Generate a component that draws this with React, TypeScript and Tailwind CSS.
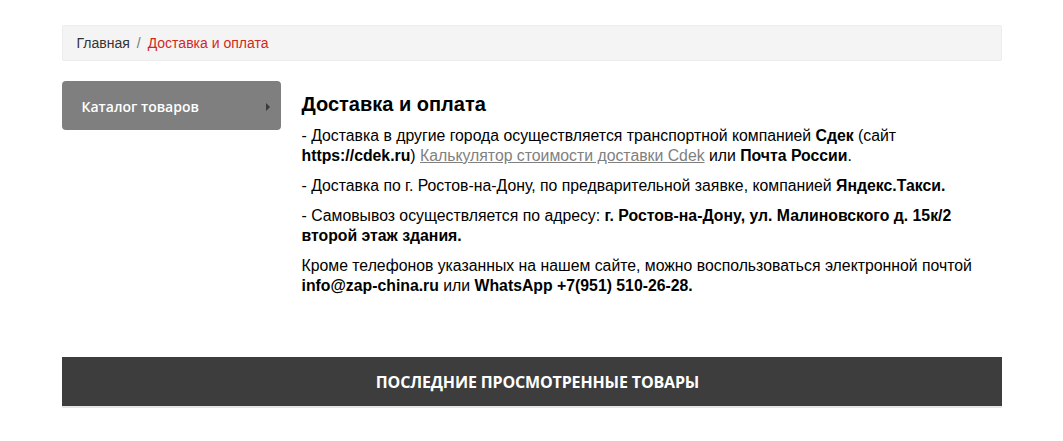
import { ReactNode } from "react";

const Crumbs = () => (
  <div className="h-[36px] flex items-center px-[14px] bg-[#f4f4f4] border border-[#ececec] rounded-[2px] text-[14px] font-['Liberation_Sans',Arial,sans-serif]">
    <a href="#" className="text-[#333]">
      Главная
    </a>
    <span className="text-[#777] px-[7px]">/</span>
    <span className="text-[#d2281e]">Доставка и оплата</span>
  </div>
);

const CatalogButton = () => (
  <button className="w-[219px] h-[49px] flex items-center justify-between pl-[20px] pr-[11px] pt-[2px] rounded-[4px] bg-[#7f7f7f] text-white text-[14px] font-semibold font-['Open_Sans',sans-serif] cursor-pointer">
    Каталог товаров
    <span className="w-0 h-0 border-y-[4px] border-y-transparent border-l-[4px] border-l-[#3a3a3a]" />
  </button>
);

const P = ({ children }: { children: ReactNode }) => (
  <p className="mb-[10px]">{children}</p>
);

const App = () => {
  return (
    <div className="bg-white min-h-[441px] pt-[25px] text-black">
      <div className="w-[940px] mx-auto">
        <Crumbs />
        <div className="flex gap-[20px] mt-[20px]">
          <aside className="w-[220px] shrink-0">
            <CatalogButton />
          </aside>
          <div className="w-[700px] pt-[11px] font-['Liberation_Sans',Arial,sans-serif] text-[15.8px] leading-[20px]">
            <h1 className="text-[20px] leading-[24px] font-bold mb-[10px]">Доставка и оплата</h1>
            <P>
              - Доставка в другие города осуществляется транспортной компанией <b>Сдек</b> (сайт{" "}
              <b>https://cdek.ru</b>){" "}
              <a href="#" className="text-[#808080] underline">
                Калькулятор стоимости доставки Cdek
              </a>{" "}
              или <b>Почта России</b>.
            </P>
            <P>
              - Доставка по г. Ростов-на-Дону, по предварительной заявке, компанией <b>Яндекс.Такси.</b>
            </P>
            <P>
              - Самовывоз осуществляется по адресу: <b>г. Ростов-на-Дону, ул. Малиновского д. 15к/2 второй этаж здания.</b>
            </P>
            <P>
              Кроме телефонов указанных на нашем сайте, можно воспользоваться электронной почтой{" "}
              <b>info@zap-china.ru</b> или <b>WhatsApp +7(951) 510-26-28.</b>
            </P>
          </div>
        </div>
        <div className="mt-[51px] h-[51px] flex items-center justify-center pl-[12px] bg-[#3d3d3d] border-b-2 border-[#e6e6e6] text-white text-[16px] font-bold uppercase font-['Open_Sans',sans-serif] tracking-[-0.15px]">
          Последние просмотренные товары
        </div>
      </div>
    </div>
  );
};

export default App;
